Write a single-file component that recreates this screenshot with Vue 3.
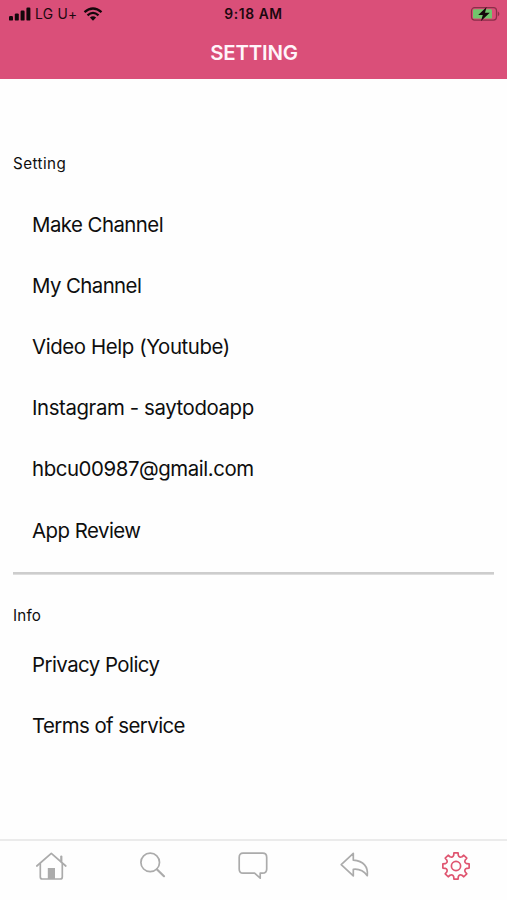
<script setup>
const settings = [
  { label: 'Make Channel', tracking: -0.54 },
  { label: 'My Channel', tracking: -0.58 },
  { label: 'Video Help (Youtube)', tracking: -0.4 },
  { label: 'Instagram - saytodoapp', tracking: -0.4 },
  { label: 'hbcu00987@gmail.com', tracking: -0.42 },
  { label: 'App Review', tracking: -0.52 },
]
const info = [
  { label: 'Privacy Policy', tracking: -0.53 },
  { label: 'Terms of service', tracking: -0.56 },
]

// Outline of an eight-toothed cog centred on (15, 15)
function cog() {
  const point = (r, deg) => {
    const a = (deg * Math.PI) / 180
    return `${(15 + r * Math.cos(a)).toFixed(2)} ${(15 + r * Math.sin(a)).toFixed(2)}`
  }
  let d = ''
  for (let i = 0; i < 8; i++) {
    const c = i * 45 - 90
    d += `${i ? 'L' : 'M'}${point(13.3, c - 9)} L${point(13.3, c + 9)} L${point(11, c + 12)} Q${point(8.6, c + 22.5)} ${point(11, c + 33)} `
  }
  return d + 'Z'
}
const cogPath = cog()
</script>

<template>
  <div class="screen">
    <header class="header">
      <div class="status">
        <div class="carrier">
          <svg class="signal" width="22" height="14" viewBox="0 0 22 14">
            <rect x="0" y="9" width="4" height="4.6" rx="1.2" />
            <rect x="5.8" y="6.4" width="4" height="7.2" rx="1.2" />
            <rect x="11.6" y="3.6" width="4" height="10" rx="1.2" />
            <rect x="17.4" y="0.6" width="4" height="13" rx="1.2" />
          </svg>
          <span class="network">LG U+</span>
          <svg class="wifi" width="20" height="14" viewBox="0 0 20 14">
            <path d="M1.5 5.1 Q10 -2.2 18.5 5.1" />
            <path d="M4.5 8.3 Q10 3.5 15.5 8.3" />
            <path class="dot" d="M6.9 10.5 Q10 8 13.1 10.5 L10 13.8Z" />
          </svg>
        </div>
        <span class="time">9:18 AM</span>
        <div class="power">
          <svg width="30" height="16" viewBox="0 0 30 16">
            <rect x="1.5" y="1.7" width="25" height="12.4" rx="3" fill="none" stroke="#8b2e49" stroke-width="1.2" />
            <rect x="3" y="3.2" width="19" height="9.4" rx="1.2" fill="#72c56c" />
            <path d="M27.8 5.3 Q31 7.9 27.8 10.5Z" fill="#8b2e49" />
            <path d="M16.6 0.9 L8.2 8.9 H12.8 L11 15 L19.8 6.8 H15Z" fill="#14070b" />
          </svg>
        </div>
      </div>
      <h1 class="title">SETTING</h1>
    </header>

    <main class="content">
      <section>
        <h2 class="caption">Setting</h2>
        <ul class="list">
          <li v-for="item in settings" :key="item.label">
            <span :style="{ letterSpacing: item.tracking + 'px' }">{{ item.label }}</span>
          </li>
        </ul>
      </section>
      <div class="divider"></div>
      <section class="info">
        <h2 class="caption short">Info</h2>
        <ul class="list">
          <li v-for="item in info" :key="item.label">
            <span :style="{ letterSpacing: item.tracking + 'px' }">{{ item.label }}</span>
          </li>
        </ul>
      </section>
    </main>

    <nav class="tabs">
      <a class="tab">
        <svg width="32" height="30" viewBox="0 0 32 30">
          <path d="M1.8 15 L16.3 2.3 L30.8 15" />
          <path d="M5.3 12.5 V26 Q5.3 28 7.3 28 H25.3 Q27.3 28 27.3 26 V12.5" />
          <path d="M26.3 10.5 V5.5" stroke-width="2.2" />
          <rect class="door" x="12.8" y="17" width="7.2" height="11" />
        </svg>
      </a>
      <a class="tab">
        <svg width="32" height="30" viewBox="0 0 32 30">
          <circle cx="14.2" cy="11.4" r="9.3" />
          <path d="M20.8 18.2 L28 25.2" stroke-width="2.2" />
        </svg>
      </a>
      <a class="tab">
        <svg width="32" height="30" viewBox="0 0 32 30">
          <path d="M6 2.2 H25.7 Q29.7 2.2 29.7 6.4 V18 Q29.7 22.2 25.5 22.2 H23.2 V27.2 L17.6 22.2 H6 Q2.2 22.2 2.2 18 V6.4 Q2.2 2.2 6 2.2Z" />
        </svg>
      </a>
      <a class="tab">
        <svg width="32" height="30" viewBox="0 0 32 30">
          <path d="M14.3 2.3 L2.2 13.6 L14.3 24.9 V18.3 Q23 17.4 28.3 24.7 Q29.8 10.7 14.3 9.2Z" />
        </svg>
      </a>
      <a class="tab active">
        <svg width="30" height="30" viewBox="0 0 30 30">
          <path :d="cogPath" />
          <circle cx="15" cy="15" r="4.6" />
        </svg>
      </a>
    </nav>
  </div>
</template>

<style>
body {
  margin: 0;
  background: #fefefe;
}
</style>

<style scoped>
.screen {
  box-sizing: border-box;
  width: 507px;
  height: 900px;
  display: flex;
  flex-direction: column;
  overflow: hidden;
  background: #fefefe;
  color: #0e0e0e;
  font-family: Inter, "Liberation Sans", sans-serif;
}
.header {
  height: 79px;
  flex: none;
  background: #da4f79;
}
.status {
  height: 27px;
  display: grid;
  grid-template-columns: 1fr auto 1fr;
  align-items: center;
  color: #1c080f;
}
.carrier {
  display: flex;
  align-items: center;
  padding-left: 9px;
}
.signal {
  fill: #14070b;
}
.network {
  width: 43px;
  margin: 1px 4.7px 0 4px;
  font-size: 13.8px;
  line-height: 16px;
  letter-spacing: 0.3px;
  white-space: nowrap;
}
.wifi {
  fill: none;
  stroke: #14070b;
  stroke-width: 2.3;
}
.wifi .dot {
  fill: #14070b;
  stroke: none;
}
.time {
  margin-top: 1px;
  font-size: 13.8px;
  font-weight: 600;
  line-height: 16px;
  letter-spacing: 0.6px;
}
.power {
  display: flex;
  justify-content: flex-end;
  padding-right: 7px;
}
.title {
  margin: 13px 0 0;
  padding-left: 1px;
  text-align: center;
  color: #fff5fa;
  font-size: 20.4px;
  line-height: 26px;
  font-weight: 600;
  letter-spacing: -0.2px;
}
.content {
  flex: 1;
  padding: 75px 13px 0;
}
.caption {
  margin: 0;
  font-size: 15.2px;
  line-height: 20px;
  font-weight: 400;
  letter-spacing: 0.45px;
}
.caption.short {
  letter-spacing: 0.2px;
}
.list {
  list-style: none;
  margin: 20px 0 0;
  padding: 0 0 0 19px;
}
.list li {
  height: 61.1px;
  display: flex;
  align-items: center;
  font-size: 20.4px;
}
.divider {
  box-sizing: border-box;
  height: 3px;
  margin-top: 11.4px;
  background: #cdcdcd;
  border-bottom: 1px solid #dedede;
}
.info {
  padding-top: 31px;
}
.info .list {
  margin-top: 8px;
}
.tabs {
  box-sizing: border-box;
  height: 61px;
  flex: none;
  display: grid;
  grid-template-columns: repeat(5, 1fr);
  border-top: 2px solid #ebebeb;
}
.tab {
  display: flex;
  justify-content: center;
  padding-top: 10px;
}
.tab svg {
  fill: none;
  stroke: #ababab;
  stroke-width: 1.7;
  stroke-linecap: round;
  stroke-linejoin: round;
}
.tab .door {
  fill: #ababab;
  stroke: none;
}
.tab.active svg {
  stroke: #df5570;
}
</style>
